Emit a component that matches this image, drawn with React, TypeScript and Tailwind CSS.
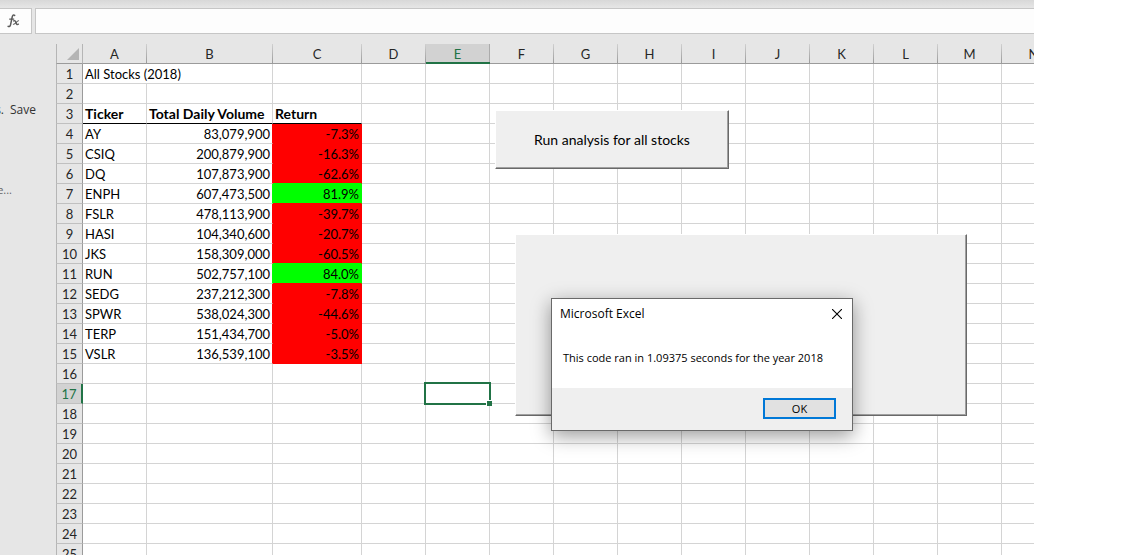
import React from 'react';

type Stock = { ticker: string; volume: string; change: string };

const stocks: Stock[] = [
  { ticker: 'AY', volume: '83,079,900', change: '-7.3%' },
  { ticker: 'CSIQ', volume: '200,879,900', change: '-16.3%' },
  { ticker: 'DQ', volume: '107,873,900', change: '-62.6%' },
  { ticker: 'ENPH', volume: '607,473,500', change: '81.9%' },
  { ticker: 'FSLR', volume: '478,113,900', change: '-39.7%' },
  { ticker: 'HASI', volume: '104,340,600', change: '-20.7%' },
  { ticker: 'JKS', volume: '158,309,000', change: '-60.5%' },
  { ticker: 'RUN', volume: '502,757,100', change: '84.0%' },
  { ticker: 'SEDG', volume: '237,212,300', change: '-7.8%' },
  { ticker: 'SPWR', volume: '538,024,300', change: '-44.6%' },
  { ticker: 'TERP', volume: '151,434,700', change: '-5.0%' },
  { ticker: 'VSLR', volume: '136,539,100', change: '-3.5%' },
];

const columns = 'ABCDEFGHIJKLMN'.split('');
const rows = Array.from({ length: 25 }, (_, i) => i + 1);
const FIRST_STOCK_ROW = 4;
const cell = 'h-5 border-r border-b p-0 pt-px leading-[18px] whitespace-nowrap';
const plain = 'border-[#d4d4d4]';

function isGain(stock: Stock) {
  return !stock.change.startsWith('-');
}

function columnWidth(name: string) {
  if (name === 'B') return 'w-[126px]';
  if (name === 'C') return 'w-[89px]';
  return 'w-16';
}

function ColumnHead({ name }: { name: string }) {
  const active = name === 'E';
  return (
    <th
      scope="col"
      className={`h-5 p-0 text-center text-[13px] leading-5 font-normal ${
        active ? 'border-b-2 border-[#217346] bg-[#d2d2d2] text-[#217346]' : 'border-b border-[#9b9b9b] text-[#262626]'
      }`}
    >
      <div className={active ? 'flex h-[18px] items-stretch' : 'flex h-[19px] items-stretch'}>
        <span className="flex-1">{name}</span>
        <span className={active ? 'w-px bg-[#ababab]' : 'w-px bg-linear-to-b from-[#d0d0d0] to-[#9b9b9b]'} />
      </div>
    </th>
  );
}

function RowHead({ row }: { row: number }) {
  const active = row === 17;
  return (
    <th
      scope="row"
      className={`h-5 border-b border-l border-b-[#c0c0c0] border-l-[#b5b5b5] p-0 pt-px text-center text-[13px] leading-[18px] font-normal ${
        active
          ? 'border-r-2 border-r-[#217346] bg-[#d2d2d2] text-[#217346]'
          : 'border-r border-r-[#9b9b9b] bg-[#e6e6e6] text-[#262626]'
      }`}
    >
      {row}
    </th>
  );
}

function StockCells({ index }: { index: number }) {
  const stock = stocks[index];
  const next = stocks[index + 1] ?? stock;
  const fill = isGain(stock) ? 'bg-[#00ff00] border-r-[#00ff00]' : 'bg-[#ff0000] border-r-[#ff0000]';
  const edge = isGain(stock) ? 'border-r-[#00ff00]' : 'border-r-[#ff0000]';
  const seam = isGain(next) ? 'border-b-[#00ff00]' : 'border-b-[#ff0000]';
  return (
    <>
      <td className={`${cell} ${plain} pl-[2px]`}>{stock.ticker}</td>
      <td className={`${cell} border-b-[#d4d4d4] ${edge} pr-[2px] text-right`}>{stock.volume}</td>
      <td className={`${cell} ${fill} ${seam} pr-[2px] text-right`}>{stock.change}</td>
    </>
  );
}

function LeadingCells({ row }: { row: number }) {
  const index = row - FIRST_STOCK_ROW;
  if (row === 1) {
    return (
      <>
        <td colSpan={2} className={`${cell} ${plain} pl-[2px]`}>All Stocks (2018)</td>
        <td className={`${cell} ${plain}`} />
      </>
    );
  }
  if (row === 3) {
    return (
      <>
        {['Ticker', 'Total Daily Volume', 'Return'].map((label) => (
          <td key={label} className={`${cell} border-r-[#d4d4d4] border-b-black pl-[2px] text-[14px] font-bold`}>{label}</td>
        ))}
      </>
    );
  }
  if (index >= 0 && index < stocks.length) return <StockCells index={index} />;
  return (
    <>
      {columns.slice(0, 3).map((name) => (
        <td key={name} className={`${cell} ${plain}`} />
      ))}
    </>
  );
}

function Selection() {
  return (
    <div className="absolute -inset-0.5 z-10 border-2 border-[#217346]">
      <span className="absolute -right-[3px] -bottom-[3px] size-1.5 border-t border-l border-white bg-[#217346]" />
    </div>
  );
}

function Sheet() {
  return (
    <table className="w-[959px] table-fixed border-separate border-spacing-0 bg-white text-[13px] text-black">
      <colgroup>
        <col className="w-[27px]" />
        {columns.map((name) => (
          <col key={name} className={columnWidth(name)} />
        ))}
      </colgroup>
      <thead>
        <tr className="bg-[#e6e6e6]">
          <td className="h-5 border-r border-b border-l border-[#b5b5b5] border-b-[#9b9b9b] p-0">
            <svg viewBox="0 0 25 19" className="block h-[19px] w-[25px]" aria-hidden="true">
              <path d="M22 4v12H10z" fill="#b4b4b4" />
            </svg>
          </td>
          {columns.map((name) => (
            <ColumnHead key={name} name={name} />
          ))}
        </tr>
      </thead>
      <tbody>
        {rows.map((row) => (
          <tr key={row}>
            <RowHead row={row} />
            <LeadingCells row={row} />
            {columns.slice(3).map((name) => {
              const selected = row === 17 && name === 'E';
              return (
                <td key={name} className={`${cell} ${plain} ${selected ? 'relative' : ''}`}>
                  {selected && <Selection />}
                </td>
              );
            })}
          </tr>
        ))}
      </tbody>
    </table>
  );
}

const raised =
  'absolute border border-t-white border-l-white border-r-[#696969] border-b-[#696969] bg-[#efefef] shadow-[inset_-1px_-1px_0_#a0a0a0]';

function MessageBox() {
  return (
    <div
      role="dialog"
      aria-labelledby="message-title"
      className="absolute top-[298px] left-[551px] flex w-[302px] flex-col border border-[#696969] bg-white font-['Open_Sans','Noto_Sans',sans-serif] text-black shadow-[0_5px_18px_rgba(0,0,0,0.4)]"
    >
      <div className="flex h-[29px] items-center justify-between pr-2.5 pl-2">
        <h1 id="message-title" className="text-[12px] leading-4">Microsoft Excel</h1>
        <button type="button" aria-label="Close" className="size-[10px]">
          <svg viewBox="0 0 10 10" className="block size-[10px]" fill="none" stroke="#000" strokeWidth="1.1">
            <path d="M0 0l10 10M10 0L0 10" />
          </svg>
        </button>
      </div>
      <p className="flex h-[60px] items-center pl-[11px] text-[11px] leading-4 whitespace-nowrap">
        This code ran in 1.09375 seconds for the year 2018
      </p>
      <div className="flex h-[42px] items-start justify-end bg-[#efefef] pt-[10px] pr-4">
        <button type="button" className="h-[21px] w-[73px] border-2 border-[#0078d7] bg-[#e1e1e1] text-[11px] leading-4">
          OK
        </button>
      </div>
    </div>
  );
}

export default function App() {
  return (
    <div className="relative h-screen overflow-hidden bg-white font-['Lato','Noto_Sans',sans-serif]">
      <div className="mr-[99px] flex h-full flex-col overflow-hidden bg-[#e6e6e6]">
        <div className="h-2 shrink-0 bg-linear-to-b from-[#d8d8d8] to-[#e6e6e6]" />
        <div className="flex h-[26px] shrink-0 gap-[3px]">
          <button
            type="button"
            aria-label="Insert function"
            className="flex w-8 items-center border-y border-r border-[#c6c6c6] bg-[#fdfdfd] pl-[7px]"
          >
            <svg viewBox="0 0 14 14" className="h-[14px] w-[14px]" fill="none" stroke="#5a5a5a" strokeLinecap="round" aria-hidden="true">
              <path d="M7.6 1.4C6.6.5 5.6 1.2 5.2 3L3.6 10.6C3.2 12.4 2.2 13 1.1 12.3" strokeWidth="1.5" />
              <path d="M2.6 5.1h4.2" strokeWidth="1.1" />
              <path d="M6.7 6.9c1.4-.8 1.8.3 2.3 1.8.5 1.6 1 2.3 2.4 1.5" strokeWidth="1.4" />
              <path d="M11.6 6.8c-1.6-.2-3.2 3.8-5.2 3.5" strokeWidth="1.1" />
            </svg>
          </button>
          <input
            aria-label="Formula bar"
            className="min-w-0 flex-1 border-y border-l border-[#c6c6c6] bg-[#fdfdfd] px-2 text-[13px] outline-none"
          />
        </div>
        <div className="flex min-h-0 flex-1 pt-2.5">
          <aside className="w-14 shrink-0 pt-[58px] font-['Open_Sans','Noto_Sans',sans-serif] text-[12px] leading-4 text-[#333333]">
            <p className="flex w-9 justify-end gap-1.5">
              <span>s.</span>
              <span>Save</span>
            </p>
            <p className="mt-16 flex w-3 justify-end text-[11px] text-[#666666]">e...</p>
          </aside>
          <main className="relative min-w-0 flex-1 overflow-hidden">
            <Sheet />
            <button type="button" className={`${raised} top-[66px] left-[439px] h-[59px] w-[234px] text-[14px] text-black`}>
              Run analysis for all stocks
            </button>
            <button type="button" aria-label="Clear worksheet" className={`${raised} top-[190px] left-[459px] h-[182px] w-[452px]`} />
          </main>
        </div>
      </div>
      <MessageBox />
    </div>
  );
}
